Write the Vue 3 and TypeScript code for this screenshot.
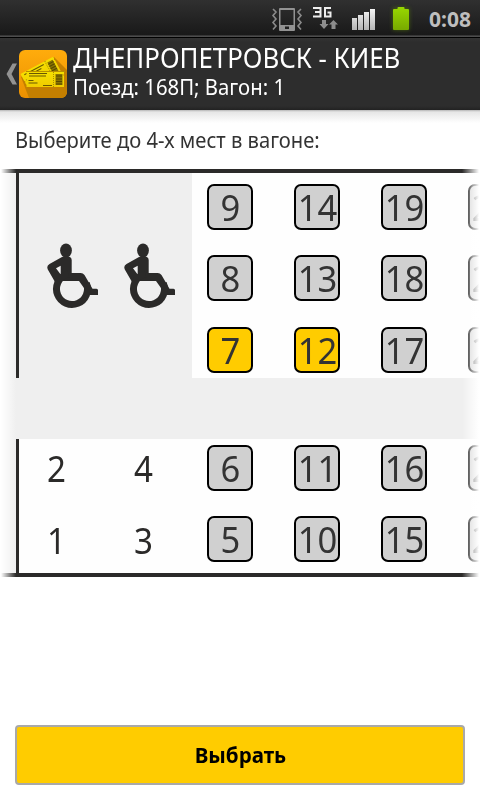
<script lang="ts" setup>
import { ref } from 'vue';

interface Seat {
  number: number;
  selected: boolean;
}

const MAX_SEATS = 4;

const makeRow = (numbers: number[], selected: number[] = []): Seat[] =>
  numbers.map((number) => ({ number, selected: selected.includes(number) }));

const upperRows = ref<Seat[][]>([
  makeRow([9, 14, 19, 24]),
  makeRow([8, 13, 18, 23]),
  makeRow([7, 12, 17, 22], [7, 12]),
]);

const lowerRows = ref<Seat[][]>([
  makeRow([6, 11, 16, 21]),
  makeRow([5, 10, 15, 20]),
]);

const unavailable = [2, 4, 1, 3];

const toggleSeat = (seat: Seat) => {
  const count = [...upperRows.value, ...lowerRows.value]
    .flat()
    .filter((item) => item.selected).length;
  if (seat.selected || count < MAX_SEATS) {
    seat.selected = !seat.selected;
  }
};
</script>

<template>
  <div class="screen">
    <div class="status-bar">
      <svg class="status-icons" width="220" height="36" viewBox="0 0 220 36">
        <defs>
          <linearGradient id="signal" x1="0" y1="0" x2="0" y2="1">
            <stop offset="0" stop-color="#f4f4f4" />
            <stop offset="1" stop-color="#b4b4b4" />
          </linearGradient>
          <linearGradient id="battery" x1="0" y1="0" x2="0" y2="1">
            <stop offset="0" stop-color="#98d800" />
            <stop offset="1" stop-color="#78a900" />
          </linearGradient>
          <filter id="glow" x="-40%" y="-30%" width="180%" height="160%">
            <feGaussianBlur stdDeviation="2" />
          </filter>
        </defs>
        <!-- vibrate -->
        <g fill="none" stroke="#8b8b8b" stroke-width="1.6">
          <path d="M13 9l3 3-3 3.500 3 3.500-3 3.500 3 3.500-3 3.500M41 9l-3 3 3 3.500-3 3.500 3 3.500-3 3.500 3 3.500" />
        </g>
        <path
          fill="#929292"
          fill-rule="evenodd"
          d="M20 8h14q1 0 1 1v21q0 1-1 1H20q-1 0-1-1V9q0-1 1-1zM20.500 10v15h13V10zM25 26.500v2.500h4v-2.500z"
        />
        <!-- 3G -->
        <g fill="none" stroke="#eeeeee" stroke-width="2">
          <path d="M53 8h7.500v8.500H53M55 12h5.500M71 8h-6v8.500h5.500v-4H67.500" />
        </g>
        <path fill="#8d8d8d" d="M62 20h4v4h2.500l-4.500 5-4.500-5H62zM71.500 29h4v-4.500h2.500l-4.500-4.500-4.500 4.500h2.500z" />
        <!-- signal -->
        <path fill="url(#signal)" d="M92 18h5v12h-5zM98 15h5v15h-5zM104 12h5v18h-5zM110 9h5v21h-5z" />
        <!-- battery -->
        <rect x="133" y="8" width="16" height="22" fill="#659500" opacity=".55" filter="url(#glow)" />
        <path fill="url(#battery)" d="M133 10q0-1 1-1h3.500V8q0-1 1-1h5q1 0 1 1v1h3.500q1 0 1 1v19q0 1-1 1h-14q-1 0-1-1z" />
      </svg>
      <span class="clock">0:08</span>
    </div>

    <header class="header">
      <svg class="back" width="19" height="48" viewBox="0 0 19 48">
        <path fill="#929292" d="M12.500 13.500H17L11.500 24 17 34.500h-4.500L6.500 24z" />
      </svg>
      <svg class="logo" width="48" height="48" viewBox="0 0 48 48">
        <defs>
          <linearGradient id="logo-bg" x1="0" y1="0" x2="0" y2="1">
            <stop offset="0" stop-color="#ffac0c" />
            <stop offset="1" stop-color="#eb9000" />
          </linearGradient>
          <linearGradient id="ticket" x1="0" y1="0" x2="0" y2="1">
            <stop offset="0" stop-color="#f5df00" />
            <stop offset="1" stop-color="#f0cc00" />
          </linearGradient>
          <clipPath id="logo-clip"><rect width="48" height="48" rx="6" /></clipPath>
        </defs>
        <g clip-path="url(#logo-clip)">
          <rect width="48" height="48" fill="url(#logo-bg)" />
          <path fill="#c47f00" d="M35 7l13 13v28H10L2 27z" />
          <g transform="translate(1.500 24) rotate(-28)">
            <path fill="url(#ticket)" d="M0 0h37v2q-1.500 1 0 2v12H5L0 12v-2q1.500-1 0-2z" />
            <path stroke="#695800" fill="none" d="M3 2.500h22M6 5h15M2 8h9" />
            <path stroke="#a78e00" stroke-dasharray="1 1" d="M27.500 0v14" />
            <path fill="#8a7400" d="M29 2.500h6V15h-6z" />
            <path stroke="#574900" d="M29 4.500h6M29 7h6M29 9.500h6M29 12h6" />
          </g>
          <path fill="#b88f00" d="M7 21h39v1H7z" />
          <path fill="url(#ticket)" d="M7.500 22H45v2q-1.500 1 0 2v11H7.500v-4q1.500-1 0-2z" />
          <path stroke="#695800" fill="none" d="M10 23.500h18M10 26h17M9.500 30.500h5M9.500 33h9M24 35.500h9" />
          <path stroke="#a78e00" stroke-dasharray="1 1" d="M34.500 22v15" />
          <path fill="#8a7400" d="M36.500 24h7v11h-7z" />
          <path stroke="#574900" d="M37 26h6M37 29h6M37 31.500h6M37 34h6" />
        </g>
      </svg>
      <div class="titles">
        <h1 class="title">ДНЕПРОПЕТРОВСК - КИЕВ</h1>
        <p class="subtitle">Поезд: 168П; Вагон: 1</p>
      </div>
    </header>

    <main class="content">
      <p class="prompt">Выберите до 4-х мест в вагоне:</p>

      <div class="wagon">
        <section class="compartment upper">
          <div class="accessible">
            <svg v-for="n in 2" :key="n" class="wheelchair" width="52" height="66" viewBox="0 0 52 66">
              <g fill="#2b2a29">
                <ellipse cx="19" cy="7.500" rx="5.900" ry="7" />
                <path
                  fill-rule="evenodd"
                  d="M15 14q4-2 8 0 1.700.8 1.700 3v13h9q2.300 0 3.800 2L45.500 45.700h4q1.500 0 1.500 1.500V52H39L37 45l-5-7H15.300L8 39 .8 26.500q-1.600-3.500 1.700-5.500zM9 25.300l4.700 6.200v-8.800z"
                />
              </g>
              <circle cx="25" cy="46" r="15.500" fill="none" stroke="#2b2a29" stroke-width="7" stroke-dasharray="75 22.400" transform="rotate(-22 25 46)" />
            </svg>
          </div>
          <div class="seats">
            <div v-for="(row, index) in upperRows" :key="index" class="seat-row">
              <button
                v-for="seat in row"
                :key="seat.number"
                class="seat"
                :class="{ selected: seat.selected }"
                @click="toggleSeat(seat)"
              >
                <span>{{ seat.number }}</span>
              </button>
            </div>
          </div>
        </section>

        <div class="aisle"></div>

        <section class="compartment lower">
          <div class="unavailable">
            <span v-for="number in unavailable" :key="number">{{ number }}</span>
          </div>
          <div class="seats">
            <div v-for="(row, index) in lowerRows" :key="index" class="seat-row">
              <button
                v-for="seat in row"
                :key="seat.number"
                class="seat"
                :class="{ selected: seat.selected }"
                @click="toggleSeat(seat)"
              >
                <span>{{ seat.number }}</span>
              </button>
            </div>
          </div>
        </section>
      </div>

      <button class="submit"><span>Выбрать</span></button>
    </main>
  </div>
</template>

<style>
body {
  margin: 0;
  overflow: hidden;
}
</style>

<style scoped>
.screen {
  display: flex;
  flex-direction: column;
  width: 480px;
  height: 800px;
  overflow: hidden;
  background: #fff;
  font-family: 'Noto Sans', 'Open Sans', sans-serif;
}

.status-bar {
  display: flex;
  justify-content: flex-end;
  box-sizing: border-box;
  height: 38px;
  background: linear-gradient(#303030, #191919 35px, #555 36px, #444 37px, #000 37px);
}

.status-icons {
  flex: none;
  margin-right: -51px;
}

.clock {
  width: 51px;
  color: #bebebe;
  font-size: 21px;
  font-weight: 700;
  line-height: 39px;
}

.header {
  display: flex;
  align-items: center;
  box-sizing: border-box;
  height: 72px;
  background: linear-gradient(#333, #2d2d2d 4px, #2d2d2d 68px, #222);
}

.back,
.logo {
  flex: none;
}

.titles {
  height: 72px;
  padding-left: 6px;
  color: #fff;
  white-space: nowrap;
}

.title {
  margin: 0;
  font-size: 28px;
  font-weight: 400;
  line-height: 39px;
  transform: scaleX(0.922);
  transform-origin: left;
}

.subtitle {
  margin: 0;
  font-size: 22px;
  line-height: 19px;
  transform: scaleX(0.925);
  transform-origin: left;
}

.content {
  display: flex;
  flex: 1;
  flex-direction: column;
  background: linear-gradient(#b5b5b5, #e6e6e6 2px, #fff 13px);
}

.prompt {
  margin: 0 15px;
  padding-top: 15px;
  height: 44px;
  color: #333;
  font-size: 22px;
  line-height: 29px;
  white-space: nowrap;
  transform: scaleX(0.917);
  transform-origin: left;
}

/* Dark strips at the top and bottom are the wagon walls */
.wagon {
  position: relative;
  padding: 4px 0;
  overflow: hidden;
  background: linear-gradient(#2b2a29 4px, #efefef 4px, #efefef 404px, #2b2a29 404px);
}

/* Edge fades that hint at horizontal scrolling */
.wagon::before,
.wagon::after {
  content: '';
  position: absolute;
  z-index: 1;
  top: 0;
  bottom: 0;
  width: 16px;
  pointer-events: none;
}

.wagon::before {
  left: 0;
  background: linear-gradient(to right, #fff 1px, rgba(255, 255, 255, 0));
}

.wagon::after {
  right: 0;
  width: 18px;
  background: linear-gradient(to left, #fff 1px, rgba(255, 255, 255, 0));
}

.compartment {
  display: flex;
  box-sizing: border-box;
  margin-left: 16px;
  border-left: 3px solid #2b2a29;
}

.upper {
  height: 205px;
}

.lower {
  height: 134px;
  background: #fefefe;
}

.aisle {
  height: 61px;
}

.accessible {
  display: flex;
  flex: none;
  gap: 25px;
  box-sizing: border-box;
  width: 173px;
  padding: 70px 0 0 28px;
}

.seats {
  flex: 1;
  display: grid;
  grid-template-rows: 71px 72px 46px;
  box-sizing: border-box;
  min-width: 0;
  padding: 11px 0 0 15px;
  overflow: hidden;
  background: #fefefe;
}

.lower .seats {
  grid-template-rows: 71px 46px;
  padding-top: 6px;
}

.seat-row {
  display: flex;
  gap: 41px;
}

.seat {
  flex: none;
  box-sizing: border-box;
  width: 46px;
  height: 46px;
  padding: 2px 0 0;
  border: 2px solid #000;
  border-radius: 7px;
  background: #d0d0d0;
  color: #333;
  font-family: inherit;
  font-size: 36px;
  line-height: 40px;
}

.seat span {
  display: block;
  padding-left: 1px;
  transform: scaleX(0.96);
}

.seat.selected {
  background: #ffcc00;
}

.unavailable {
  flex: none;
  display: grid;
  grid-template-columns: 87px 87px;
  grid-template-rows: 72px 62px;
  width: 173px;
  color: #2b2a29;
  font-size: 36px;
  line-height: 59px;
}

.unavailable span {
  width: 75px;
  text-align: center;
  transform: scaleX(0.92);
}

.submit {
  box-sizing: border-box;
  width: 450px;
  height: 60px;
  margin: 148px 15px 0;
  padding: 0;
  border: 2px solid #a9a9a9;
  border-radius: 4px;
  background: #ffcc00;
  color: #000;
  font-family: inherit;
  font-size: 21.5px;
  font-weight: 700;
  line-height: 54px;
}

.submit span {
  display: block;
  padding-left: 1px;
  transform: scaleX(0.955);
}
</style>
